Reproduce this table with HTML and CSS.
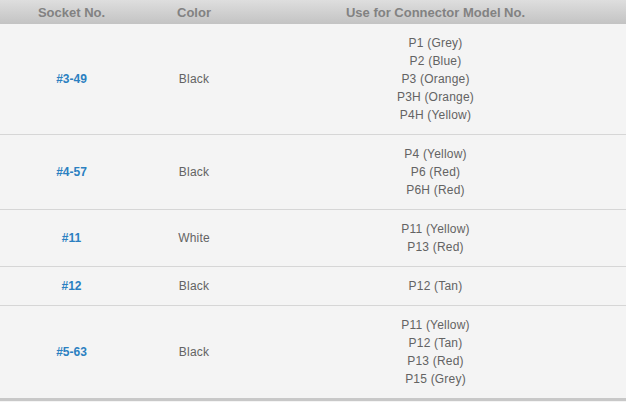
FILE: index.html
```html
<!DOCTYPE html>
<html>
<head>
<meta charset="utf-8">
<link rel="stylesheet" href="styles.css">
</head>
<body>
<table class="sockets">
  <colgroup>
    <col class="c1"><col class="c2"><col class="c3">
  </colgroup>
  <thead>
    <tr><th>Socket No.</th><th>Color</th><th>Use for Connector Model No.</th></tr>
  </thead>
  <tbody>
    <tr>
      <td><a class="sock" href="#">#3-49</a></td>
      <td>Black</td>
      <td>P1 (Grey)<br>P2 (Blue)<br>P3 (Orange)<br>P3H (Orange)<br>P4H (Yellow)</td>
    </tr>
    <tr>
      <td><a class="sock" href="#">#4-57</a></td>
      <td>Black</td>
      <td>P4 (Yellow)<br>P6 (Red)<br>P6H (Red)</td>
    </tr>
    <tr>
      <td><a class="sock" href="#">#11</a></td>
      <td>White</td>
      <td>P11 (Yellow)<br>P13 (Red)</td>
    </tr>
    <tr>
      <td><a class="sock" href="#">#12</a></td>
      <td>Black</td>
      <td>P12 (Tan)</td>
    </tr>
    <tr class="last">
      <td><a class="sock" href="#">#5-63</a></td>
      <td>Black</td>
      <td>P11 (Yellow)<br>P12 (Tan)<br>P13 (Red)<br>P15 (Grey)</td>
    </tr>
  </tbody>
</table>
</body>
</html>
```
FILE: styles.css
```css
html, body {
  margin: 0;
  padding: 0;
  background: #f4f4f4;
}
.sockets {
  width: 626px;
  border-collapse: collapse;
  font-family: "Liberation Sans", Arial, sans-serif;
  font-size: 12px;
  color: #636363;
  background: #f4f4f4;
}
.c1 { width: 143px; }
.c2 { width: 102px; }
.c3 { width: 381px; }
.sockets th {
  height: 24px;
  padding: 0;
  font-size: 13px;
  font-weight: bold;
  color: #828282;
  text-align: center;
  vertical-align: middle;
  background: linear-gradient(#dedede, #c3c3c3);
}
.sockets td {
  padding: 10px 0;
  line-height: 18px;
  text-align: center;
  vertical-align: middle;
  letter-spacing: 0.2px;
  border-bottom: 1px solid #d6d6d6;
}
.sockets tr.last td {
  border-bottom: 3px solid #c8c8c8;
}
.sock {
  color: #2b80c1;
  font-weight: bold;
  text-decoration: none;
  letter-spacing: 0;
}
```
